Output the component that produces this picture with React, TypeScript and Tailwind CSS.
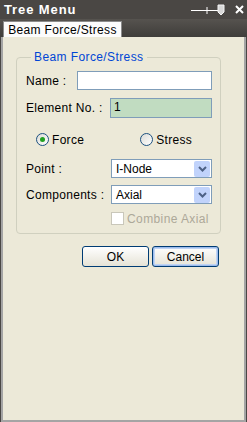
import React from "react";

const font = { fontFamily: '"Liberation Sans", Arial, sans-serif' };

function Chevron() {
  return (
    <div className="flex h-[16px] w-[16px] items-center justify-center rounded-[2px] bg-[#c1d3fb]">
      <svg width="9" height="6" viewBox="0 0 9 6">
        <path d="M1 1 L4.5 4.5 L8 1" stroke="#4d6185" strokeWidth="2" fill="none" />
      </svg>
    </div>
  );
}

function Select({ value }: { value: string }) {
  return (
    <div className="flex h-[19px] w-[101px] items-center justify-between border border-[#7f9db9] bg-white pl-[4px] pr-[1px]">
      <span className="text-[12px] leading-none text-black">{value}</span>
      <Chevron />
    </div>
  );
}

function Radio({ checked }: { checked?: boolean }) {
  return (
    <div className="flex h-[13px] w-[13px] items-center justify-center rounded-full border border-[#1c5180] bg-gradient-to-br from-[#dcdcd6] to-white">
      {checked && <div className="h-[5px] w-[5px] rounded-full bg-[#21a121]" />}
    </div>
  );
}

export default function App() {
  return (
    <div className="flex h-[422px] w-[247px] flex-col bg-[#4a4744]" style={font}>
      {/* title bar */}
      <div className="flex h-[19px] items-center justify-between pl-[4px] pr-[3px]">
        <span className="text-[13px] font-bold leading-none tracking-[0.9px] text-white">Tree Menu</span>
        <div className="flex items-center gap-[10px]">
          <svg width="34" height="12" viewBox="0 0 34 12">
            <path d="M0 6.5 H16 M16 3 V10 M16 6.5 H27" stroke="#ffffff" strokeWidth="1" fill="none" />
            <path d="M27 1 H33 V8 L30 11 L27 8 Z" fill="#d8d8d8" stroke="#f4f4f4" strokeWidth="1" />
          </svg>
          <svg width="9" height="9" viewBox="0 0 9 9">
            <path d="M1 1 L8 8 M8 1 L1 8" stroke="#ffffff" strokeWidth="2" fill="none" />
          </svg>
        </div>
      </div>
      {/* tab strip */}
      <div className="flex h-[18px] items-end bg-gradient-to-b from-[#56534f] to-[#3f3d3a] pl-[3px]">
        <div className="flex h-[16px] w-[119px] items-center justify-center border border-b-0 border-[#8c8c8c] bg-[#fcfcfc]">
          <span className="text-[12px] leading-none tracking-[0.35px] text-black">Beam Force/Stress</span>
        </div>
      </div>
      {/* panel */}
      <div className="mx-[1px] flex flex-1 flex-col border-x-2 border-b-2 border-[#a4a4a4] bg-[#ece9d8] px-[13px] pt-[13px]">
        <fieldset className="w-[205px] rounded-[4px] border border-[#d0d0bf] pb-[8px] pl-[9px] pr-[8px]">
          <legend className="ml-[5px] px-[3px] text-[12px] leading-[14px] tracking-[0.4px] text-[#0046d5]">Beam Force/Stress</legend>
          <div className="mt-[7px] flex h-[19px] items-center justify-between">
            <span className="text-[12px] leading-none tracking-[0.3px] text-black">Name :</span>
            <div className="h-[19px] w-[135px] border border-[#7f9db9] bg-white" />
          </div>
          <div className="mt-[8px] flex h-[20px] items-center justify-between">
            <span className="text-[12px] leading-none tracking-[0.3px] text-black">Element No. :</span>
            <div className="flex h-[20px] w-[102px] items-start border border-[#7f9db9] bg-[#c1dcc1] pl-[3px] pt-[2px]">
              <span className="text-[12px] leading-none text-black">1</span>
            </div>
          </div>
          <div className="mt-[15px] flex h-[13px] items-center">
            <div className="ml-[10px] flex items-center gap-[3px]">
              <Radio checked />
              <span className="text-[12px] leading-none tracking-[0.3px] text-black">Force</span>
            </div>
            <div className="ml-[56px] flex items-center gap-[3px]">
              <Radio />
              <span className="text-[12px] leading-none tracking-[0.3px] text-black">Stress</span>
            </div>
          </div>
          <div className="mt-[13px] flex h-[19px] items-center justify-between">
            <span className="text-[12px] leading-none tracking-[0.3px] text-black">Point :</span>
            <Select value="I-Node" />
          </div>
          <div className="mt-[7px] flex h-[19px] items-center justify-between">
            <span className="text-[12px] leading-none tracking-[0.3px] text-black">Components :</span>
            <Select value="Axial" />
          </div>
          <div className="mt-[8px] flex h-[13px] items-center gap-[3px] pl-[85px]">
            <div className="h-[13px] w-[13px] border border-[#c9c7ba] bg-white" />
            <span className="text-[12px] leading-none tracking-[0.4px] text-[#aca899]">Combine Axial</span>
          </div>
        </fieldset>
        <div className="mt-[12px] flex justify-end gap-[3px] pr-[12px]">
          <button className="flex h-[21px] w-[67px] items-center justify-center rounded-[3px] border border-[#003c74] bg-gradient-to-b from-white to-[#e6e3d6] text-[12px] leading-none text-black">
            OK
          </button>
          <button className="flex h-[21px] w-[67px] items-center justify-center rounded-[3px] border border-[#003c74] bg-gradient-to-b from-white to-[#e6e3d6] text-[12px] leading-none text-black shadow-[inset_0_0_0_1px_#9dbcec,inset_0_0_0_2px_#c0d4f3]">
            Cancel
          </button>
        </div>
      </div>
    </div>
  );
}
